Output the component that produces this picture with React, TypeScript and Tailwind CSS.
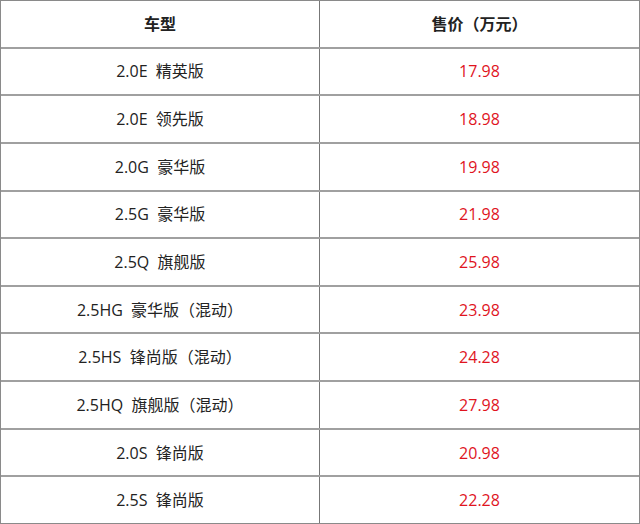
import React from 'react'

const rows = [
  { model: '2.0E  精英版', price: '17.98' },
  { model: '2.0E  领先版', price: '18.98' },
  { model: '2.0G  豪华版', price: '19.98' },
  { model: '2.5G  豪华版', price: '21.98' },
  { model: '2.5Q  旗舰版', price: '25.98' },
  { model: '2.5HG  豪华版（混动）', price: '23.98' },
  { model: '2.5HS  锋尚版（混动）', price: '24.28' },
  { model: '2.5HQ  旗舰版（混动）', price: '27.98' },
  { model: '2.0S  锋尚版', price: '20.98' },
  { model: '2.5S  锋尚版', price: '22.28' },
]

export default function App() {
  return (
    <div
      className="w-[640px] h-[524px] bg-white flex flex-col border border-[#8a8a8a] text-[16px] text-[#222]"
      style={{ fontFamily: '"Open Sans", "Noto Sans CJK SC", sans-serif' }}
    >
      {/* 表头 */}
      <div className="flex-1 grid grid-cols-2 border-b-2 border-[#a0a0a0]">
        <div className="flex items-center justify-center font-bold border-r border-[#777]">车型</div>
        <div className="flex items-center justify-center font-bold">售价（万元）</div>
      </div>

      {rows.map((row, i) => (
        <div
          key={i}
          className={`flex-1 grid grid-cols-2 ${i < rows.length - 1 ? 'border-b-2 border-[#a0a0a0]' : ''}`}
        >
          <div className="flex items-center justify-center whitespace-pre border-r border-[#777]">{row.model}</div>
          <div className="flex items-center justify-center text-[#e0141e]">{row.price}</div>
        </div>
      ))}
    </div>
  )
}
